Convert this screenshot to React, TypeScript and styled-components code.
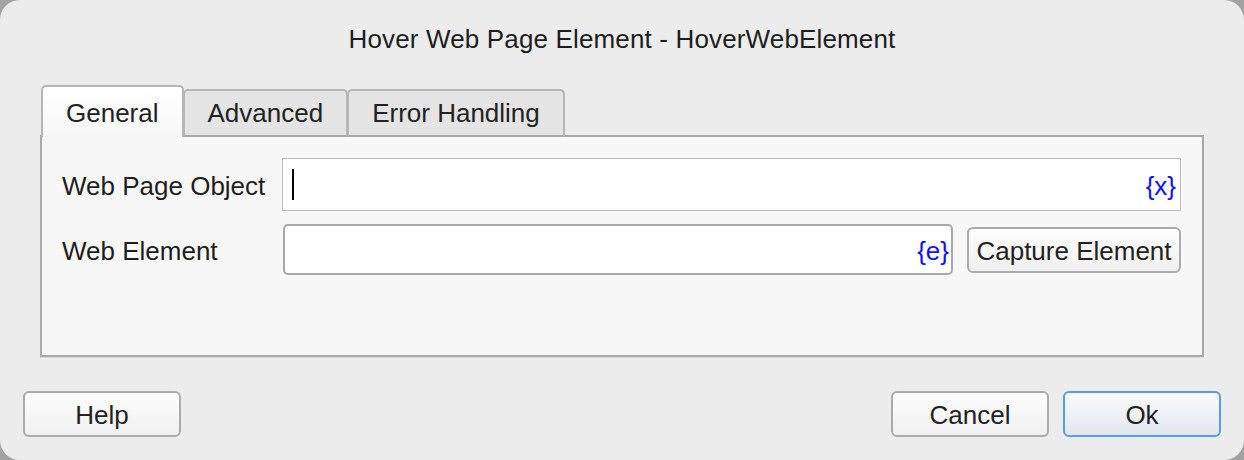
import React, { useState } from "react";
import styled, { createGlobalStyle } from "styled-components";

const GlobalStyle = createGlobalStyle`
  html, body {
    margin: 0;
    padding: 0;
    background: #a2a2a2;
  }
  body {
    font-family: "Liberation Sans", Arial, sans-serif;
    color: #222;
  }
`;

const TABS = ["General", "Advanced", "Error Handling"];

export default function App() {
  const [tab, setTab] = useState(0);

  return (
    <>
      <GlobalStyle />
      <Window>
        <Title>Hover Web Page Element - HoverWebElement</Title>
        <TabBar>
          {TABS.map((name, i) => (
            <Tab key={name} active={tab === i} onClick={() => setTab(i)}>
              {name}
            </Tab>
          ))}
        </TabBar>
        <Panel>
          <FieldRow>
            <Label>Web Page Object</Label>
            <TextBox>
              <Caret />
              <VarTag>{"{x}"}</VarTag>
            </TextBox>
          </FieldRow>
          <FieldRow>
            <Label>Web Element</Label>
            <RoundBox>
              <VarTag>{"{e}"}</VarTag>
            </RoundBox>
            <CaptureButton>Capture Element</CaptureButton>
          </FieldRow>
        </Panel>
        <Footer>
          <Button>Help</Button>
          <Spacer />
          <Button>Cancel</Button>
          <Button primary>Ok</Button>
        </Footer>
      </Window>
    </>
  );
}

const Window = styled.div`
  width: 1244px;
  height: 460px;
  box-sizing: border-box;
  background: #ececec;
  border-radius: 20px;
  display: flex;
  flex-direction: column;
  overflow: hidden;
`;

const Title = styled.div`
  padding-top: 24px;
  height: 31px;
  line-height: 30px;
  font-size: 26px;
  letter-spacing: 0.15px;
  text-align: center;
  color: #1e1e1e;
`;

const TabBar = styled.div`
  display: flex;
  align-items: flex-end;
  margin: 30px 0 -2px 41px;
  position: relative;
  z-index: 1;
`;

const Tab = styled.div<{ active: boolean }>`
  box-sizing: border-box;
  height: ${({ active }) => (active ? "52px" : "48px")};
  padding: ${({ active }) => (active ? "11px 23px 0" : "7px 23px 0")};
  line-height: 30px;
  font-size: 26px;
  color: #222;
  cursor: pointer;
  border: 2px solid #b6b6b6;
  border-bottom: ${({ active }) => (active ? "none" : "2px solid #a9a9a9")};
  border-radius: 5px 5px 0 0;
  background: ${({ active }) =>
    active ? "linear-gradient(#ffffff, #f7f7f7)" : "#e4e4e4"};
  margin-right: -1px;
`;

const Panel = styled.div`
  box-sizing: border-box;
  margin: 0 40px;
  height: 222px;
  border: 2px solid #a9a9a9;
  background: #f7f7f7;
  padding: 21px 21px 0 20px;
  display: flex;
  flex-direction: column;
  gap: 13px;
  box-shadow: 0 1px 0 #dcdcdc;
`;

const FieldRow = styled.div`
  display: flex;
  align-items: center;
`;

const Label = styled.div`
  width: 220px;
  flex: none;
  padding-top: 3px;
  font-size: 26px;
  color: #1e1e1e;
`;

const TextBox = styled.div`
  flex: 1;
  box-sizing: border-box;
  height: 53px;
  background: #fff;
  border: 1px solid #bcbcbc;
  display: flex;
  align-items: center;
  padding: 0 4px 0 9px;
`;

const RoundBox = styled(TextBox)`
  height: 51px;
  margin-left: 1px;
  border: 2px solid #a8a8a8;
  border-radius: 5px;
  padding-right: 2px;
`;

const Caret = styled.span`
  width: 2px;
  height: 31px;
  background: #000;
`;

const VarTag = styled.span`
  margin-left: auto;
  padding-top: 3px;
  font-size: 26px;
  color: #1010ff;
`;

const Button = styled.button<{ primary?: boolean }>`
  box-sizing: border-box;
  width: 158px;
  height: 46px;
  font-family: "Liberation Sans", Arial, sans-serif;
  font-size: 26px;
  color: #222;
  border: 2px solid ${({ primary }) => (primary ? "#5a9ae8" : "#ababab")};
  border-radius: 6px;
  background: ${({ primary }) =>
    primary
      ? "linear-gradient(#f9fafc, #e3e7ee)"
      : "linear-gradient(#fdfdfd, #f0f0f0)"};
  padding: 3px 0 0;
`;

const CaptureButton = styled(Button)`
  width: 214px;
  margin-left: 14px;
`;

const Footer = styled.div`
  display: flex;
  gap: 14px;
  margin-top: 34px;
  padding: 0 23px;
`;

const Spacer = styled.div`
  flex: 1;
`;
